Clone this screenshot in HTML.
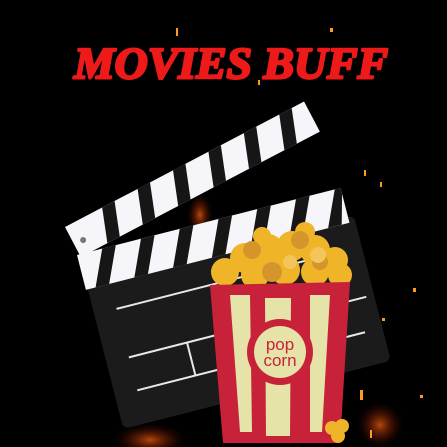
<!DOCTYPE html>
<html><head><style>html,body{margin:0;padding:0;background:#000;width:447px;height:447px;overflow:hidden}</style></head>
<body>
<svg width="447" height="447" viewBox="0 0 447 447" xmlns="http://www.w3.org/2000/svg">
<defs>
<radialGradient id="f1" cx="0.5" cy="0.5" r="0.5"><stop offset="0" stop-color="#ff6a10" stop-opacity="0.7"/><stop offset="0.5" stop-color="#a02805" stop-opacity="0.35"/><stop offset="1" stop-color="#000" stop-opacity="0"/></radialGradient>
</defs>
<rect width="447" height="447" fill="#000"/>
<ellipse cx="200" cy="215" rx="14" ry="24" fill="url(#f1)"/>
<ellipse cx="150" cy="440" rx="40" ry="18" fill="url(#f1)"/>
<ellipse cx="380" cy="425" rx="25" ry="25" fill="url(#f1)"/>
<g fill="#ff9a20">
<rect x="364" y="170" width="2" height="6"/><rect x="380" y="182" width="2" height="5"/><rect x="382" y="318" width="3" height="3"/><rect x="413" y="288" width="3" height="4"/><rect x="420" y="395" width="3" height="3"/><rect x="370" y="430" width="2" height="8"/><rect x="116" y="345" width="2" height="5"/><rect x="176" y="28" width="2" height="8"/><rect x="258" y="80" width="2" height="5"/><rect x="360" y="390" width="3" height="10"/><rect x="330" y="28" width="3" height="4"/>
</g>
<text x="74" y="78" font-family="Liberation Serif, serif" font-weight="bold" font-style="italic" font-size="44" fill="#ee1a1a" stroke="#ee1a1a" stroke-width="2.5" stroke-linejoin="round" textLength="314" lengthAdjust="spacingAndGlyphs">MOVIES BUFF</text>

<g transform="translate(77,255) rotate(-14.3)">
<rect x="2" y="30" width="276" height="150" rx="6" fill="#1b1b1b"/>
<rect x="0" y="0" width="272" height="36" fill="#f6f6fa"/>
<g fill="#161616">
<polygon points="10,36 26,0 40,0 24,36"/>
<polygon points="50,36 66,0 80,0 64,36"/>
<polygon points="90,36 106,0 120,0 104,36"/>
<polygon points="130,36 146,0 160,0 144,36"/>
<polygon points="170,36 186,0 200,0 184,36"/>
<polygon points="210,36 226,0 240,0 224,36"/>
<polygon points="250,36 266,0 272,0 272,6 264,36"/>
</g>
<g stroke="#e8e8e8" stroke-width="2">
<line x1="25" y1="62" x2="250" y2="62"/>
<line x1="25" y1="112" x2="270" y2="112"/>
<line x1="25" y1="146" x2="260" y2="146"/>
<line x1="85" y1="112" x2="85" y2="146"/>
</g>
</g>
<g transform="translate(65,227) rotate(-27.7)">
<rect x="0" y="0" width="270" height="34" fill="#f6f6fa"/>
<g fill="#161616">
<polygon points="30,34 42,0 56,0 44,34"/>
<polygon points="70,34 82,0 96,0 84,34"/>
<polygon points="110,34 122,0 136,0 124,34"/>
<polygon points="150,34 162,0 176,0 164,34"/>
<polygon points="190,34 202,0 216,0 204,34"/>
<polygon points="230,34 242,0 256,0 244,34"/>
</g>
<circle cx="10" cy="20" r="3" fill="#777"/>
</g>

<g fill="#f0b429">
<circle cx="225" cy="272" r="14"/><circle cx="245" cy="258" r="15"/><circle cx="268" cy="250" r="16"/><circle cx="292" cy="246" r="15"/><circle cx="315" cy="250" r="15"/><circle cx="335" cy="260" r="13"/><circle cx="340" cy="275" r="12"/><circle cx="255" cy="275" r="14"/><circle cx="285" cy="270" r="15"/><circle cx="315" cy="272" r="14"/><circle cx="262" cy="236" r="9"/><circle cx="305" cy="232" r="10"/>
</g>
<g fill="#d4952b">
<circle cx="252" cy="250" r="9"/><circle cx="300" cy="240" r="9"/><circle cx="272" cy="272" r="10"/><circle cx="320" cy="262" r="8"/>
</g>
<g fill="#f4c55a"><circle cx="318" cy="255" r="8"/><circle cx="290" cy="262" r="7"/></g>
<polygon points="210,285 350,282 340,443 223,443" fill="#c8223a"/>
<g fill="#e6e3a8">
<polygon points="230,295 250,295 252,432 240,432"/>
<polygon points="265,298 291,298 290,436 266,436"/>
<polygon points="310,295 330,295 322,432 310,432"/>
</g>
<circle cx="280" cy="352" r="33" fill="#c8223a"/>
<circle cx="280" cy="352" r="26" fill="#e6e3a8"/>
<text x="280" y="350" text-anchor="middle" font-family="Liberation Sans, sans-serif" font-size="17" fill="#c8223a">pop</text>
<text x="280" y="366" text-anchor="middle" font-family="Liberation Sans, sans-serif" font-size="17" fill="#c8223a">corn</text>
<g fill="#f0b429"><circle cx="332" cy="428" r="7"/><circle cx="342" cy="426" r="7"/><circle cx="338" cy="436" r="7"/></g>
</svg>
</body></html>
